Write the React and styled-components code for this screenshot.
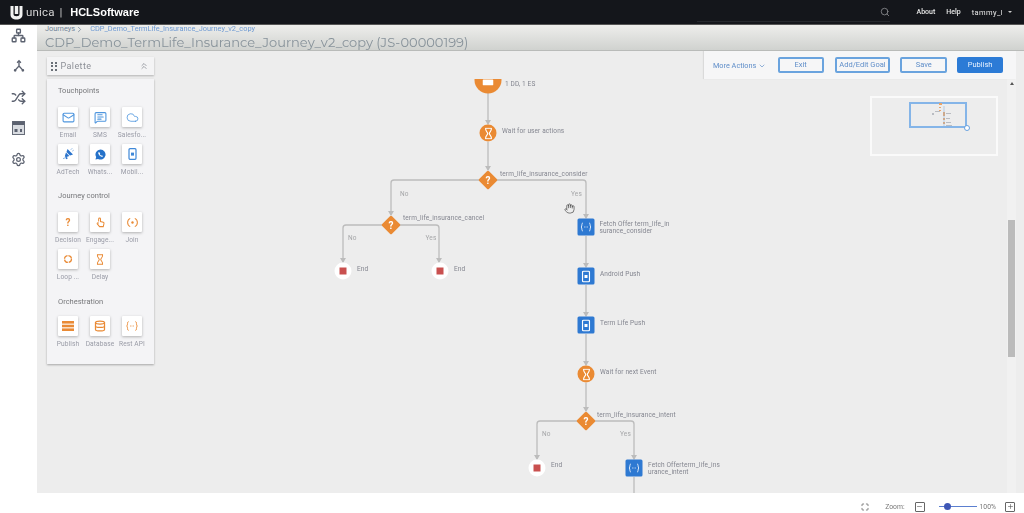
import React from "react";
import styled, { createGlobalStyle } from "styled-components";
import { Network, Shuffle, Settings, Search, ChevronDown, ChevronRight, ChevronsUp, Mail, MessageSquareText, Cloud, Database, Maximize, Minus, Plus, Hand } from "lucide-react";

const Global = createGlobalStyle`
  html, body { margin: 0; padding: 0; background: #fff; overflow: hidden; }
  body { font-family: Roboto, "Liberation Sans", sans-serif; }
  #root { width: 1024px; height: 513px; }
`;
const Page = styled.div`
  width: 1024px; height: 513px; display: flex; flex-direction: column; overflow: hidden; filter: blur(0.4px);
`;
const TopBar = styled.header`
  height: 24px; flex: none; background: #14161b; display: flex; align-items: center; color: #fff; box-shadow: 0 1px 0 #555;
  position: relative; z-index: 3;
`;
const Logo = styled.div`display: flex; align-items: center; padding-left: 10px; width: 140px;`;
const UnicaText = styled.span`font-size: 11.5px; color: #d5d5d5; margin-left: 3px; letter-spacing: .2px;`;
const Sep = styled.span`font-size: 10px; color: #ddd; margin: 0 8px 0 5px;`;
const Hcl = styled.span`font-size: 11px; font-weight: 700; color: #fff; font-family: "Liberation Sans", sans-serif;`;
const SearchWrap = styled.div`
  margin-left: auto; width: 193px; height: 19px; box-sizing: border-box; border-bottom: 1px solid #26292e; display: flex; justify-content: flex-end; align-items: center; color: #8b8d90;
`;
const TopLink = styled.span`font-size: ${p => p.$fs || 7}px; font-weight: ${p => p.$w || 500}; color: #e8e8e8; margin-left: ${p => p.$ml}px; letter-spacing: ${p => p.$ls || 0}px;`;
const Caret = styled.span`width:0;height:0;border-left:2px solid transparent;border-right:2px solid transparent;border-top:2px solid #ccc;margin:0 12px 0 5px;`;
const Body = styled.div`flex: 1; display: flex; min-height: 0;`;
const SideNav = styled.nav`
  width: 37px; flex: none; background: #fff; display: flex; flex-direction: column; align-items: center; gap: 16.4px; padding: 4px 0 0 0; box-sizing: border-box; color: #5c6270;
`;
const Main = styled.main`flex: 1; display: flex; flex-direction: column; min-width: 0;`;
const TitleBand = styled.div`
  height: 27px; flex: none; box-sizing: border-box; padding: 0 0 0 8px; background: linear-gradient(#efefed, #d0d2cf); border-bottom: 1px solid #b9bbb9;
`;
const Crumbs = styled.div`font-size: 7.4px; color: #6f8296; line-height: 10px; display: flex; align-items: center;`;
const CrumbLink = styled.span`color: #6e9ad3; margin-left: 6px;`;
const Title = styled.h1`margin: 1px 0 0; font: 400 13px/15px Montserrat, "Open Sans", sans-serif; color: #87929a; letter-spacing: 0;`;
const Workspace = styled.div`flex: 1; position: relative; background: #ededed; min-height: 0; overflow: hidden;`;
const Footer = styled.footer`
  height: 20px; flex: none; box-sizing: border-box; padding: 7px 9px 0 0; background: #fff; display: flex; align-items: center; justify-content: flex-end; font-size: 6.8px; color: #777;
`;
const FullBtn = styled.span`display: flex; color: #444; margin-right: 12px;`;
const ZoomLabel = styled.span`margin-left: ${p => p.$ml}px;`;
const ZoomBtn = styled.span`display:flex; width:8px; height:8px; border:1px solid #666; border-radius:1px; align-items:center; justify-content:center; color:#555; margin-left:${p=>p.$ml}px;`;
const Slider = styled.div`width: 38px; height: 1px; background: #5b7fd0; margin: 0 1px 0 14px; position: relative;`;
const Thumb = styled.span`position:absolute; left:5px; top:-3px; width:7px; height:7px; border-radius:50%; background:#3e56b5;`;

const Palette = styled.aside`position: absolute; left: 10px; top: 6px; width: 107px; z-index: 2;`;
const PaletteHead = styled.div`
  height: 18px; background: #f4f4f5; box-shadow: 0 1px 2px rgba(0,0,0,.25); display: flex; align-items: center; padding: 0 5px 0 4px; color: #8c8f96; font-size: 9px; letter-spacing: .4px; gap: 4px;
`;
const Dots = styled.span`display: grid; grid-template-columns: 2px 2px; gap: 1.5px;
  i { width: 2px; height: 2px; background: #6a7077; }`;
const PaletteBody = styled.div`
  margin-top: 4px; height: 285px; box-sizing: border-box; background: #f4f4f6; box-shadow: 0 1px 2px rgba(0,0,0,.3); padding: 7px 0 0 11px;
`;
const GroupTitle = styled.div`font-size: 7.5px; line-height: 9px; color: #77787b; margin-bottom: ${p => p.$mb}px; margin-top: ${p => p.$mt || 0}px;`;
const TileGrid = styled.div`display: grid; grid-template-columns: repeat(3, 20px); column-gap: 12px; row-gap: 0;`;
const TileCell = styled.div`height: 37px; display: flex; flex-direction: column; align-items: center;`;
const Tile = styled.div`
  width: 20px; height: 20px; flex: none; background: #fff; border-radius: 1px; box-shadow: 0 1px 3px rgba(0,0,0,.28); display: flex; align-items: center; justify-content: center; color: ${p => p.$c};
  font-weight: 700; font-size: 10px;
`;
const TileLabel = styled.span`font-size: 6.6px; line-height: 8px; color: #999ba6; margin-top: 4px; white-space: nowrap; letter-spacing:.1px;`;

const ActionBar = styled.div`
  position: absolute; right: 8px; top: 0; width: 312px; height: 28px; z-index: 2; background: #f6f6f7; box-shadow: -1px 0 1px rgba(0,0,0,.08); display: flex; align-items: flex-start; padding: 6px 13px 0 9px; box-sizing: border-box;
`;
const More = styled.span`font-size: 7.3px; color: #5f8ec9; display: flex; align-items: center; gap: 2px; margin-top: 4px; width: 65px;`;
const ActionBtn = styled.button`
  width: ${p => p.$w}px; height: 16px; padding: 0 0 1px; box-sizing: border-box; margin-right: ${p => p.$mr}px; border: 2px solid ${p => p.$primary ? "#2c7bd6" : "#6aa3de"}; border-radius: 2px; background: ${p => p.$primary ? "#2c7bd6" : "#f6f6f7"}; color: ${p => p.$primary ? "#eaf3ff" : "#5f8ec9"}; font: 400 7.5px Roboto, sans-serif;
`;
const Minimap = styled.div`
  position: absolute; left: 833px; top: 45px; width: 128px; height: 60px; box-sizing: border-box; border: 2px solid #fafafa; z-index: 1;
`;
const MiniView = styled.div`position: absolute; left: 37px; top: 4px; width: 58px; height: 26px; box-sizing: border-box; border: 2px solid #85b5e8;`;
const MiniHandle = styled.span`position: absolute; right: -5px; bottom: -5px; width: 6px; height: 6px; box-sizing: border-box; border: 1px solid #69a2df; border-radius: 50%; background: #fff;`;
const MiniFlow = styled.svg`position: absolute; left: 15px; top: -1px; width: 30px; height: 24px;`;
const ScrollTrack = styled.div`position: absolute; right: 8px; top: 0; bottom: 0; width: 9px; background: #f1f1f1; display: flex; justify-content: center;`;
const ScrollArrow = styled.span`position:absolute; top:31px; width:0;height:0;border-left:2px solid transparent;border-right:2px solid transparent;border-bottom:3px solid #555;`;
const ScrollThumb = styled.div`position:absolute; top:169px; width:7px; height:137px; background:#bbb;`;

const Canvas = styled.div`position: absolute; left: 0; right: 0; top: 28px; bottom: 0; overflow: hidden;`;
const Connectors = styled.svg`position: absolute; left: 0; top: 0; width: 987px; height: 414px;`;
const Node = styled.div`
  position: absolute; left: ${p => p.$x - 37}px; top: ${p => p.$y - 79}px; transform: translate(-50%, -50%); display: flex; align-items: center; justify-content: center; color: #fff;
`;
const Circle = styled(Node)`width: ${p => p.$r * 2}px; height: ${p => p.$r * 2}px; border-radius: 50%; background: #ea8a33;`;
const Square = styled(Node)`width: 17px; height: 17px; border-radius: 1.5px; background: #2e79d2;`;
const Diamond = styled(Node)`width: 14px; height: 14px; background: #ea8a33; border-radius: 1.5px; transform: translate(-50%, -50%) rotate(45deg);
  b { transform: rotate(-45deg); font: 700 10px Roboto, sans-serif; }`;
const EndNode = styled(Node)`width: 17px; height: 17px; border-radius: 50%; background: #fff;
  i { width: 7px; height: 7px; background: #c9504f; }`;
const Label = styled.div`
  position: absolute; left: ${p => p.$x - 37}px; top: ${p => p.$y - 79}px; font-size: 6.5px; line-height: 7px; color: ${p => p.$light ? "#a5a6a8" : "#83858f"}; white-space: pre; letter-spacing: .12px;
`;
const Cursor = styled.div`position: absolute; left: 527px; top: 120px; color: #444;`;

const Hourglass = ({ w = 8, h = 12 }) => (
  <svg width={w} height={h} viewBox="0 0 8 12" fill="none" stroke="currentColor" strokeWidth="1.1">
    <path d="M.8 .7h6.400M.8 11.300h6.400" />
    <path d="M1.200 .7C.5 3.500 3.200 4.500 3.200 6 3.200 7.500 .5 8.500 1.200 11.300M6.800 .7C7.500 3.500 4.800 4.500 4.800 6 4.800 7.500 7.500 8.500 6.800 11.300" />
  </svg>
);
const Phone = () => (
  <svg width="9" height="12" viewBox="0 0 9 12" fill="none" stroke="currentColor" strokeWidth="1.2">
    <rect x="1" y=".7" width="7" height="10.600" rx="1" />
    <path d="M3 4.600h3v3H3z" fill="currentColor" stroke="none" />
  </svg>
);
const Braces = ({ size = 11 }) => (
  <svg width={size} height={size} viewBox="0 0 12 12" fill="none" stroke="currentColor" strokeWidth=".9">
    <path d="M2.600 1.500C1 1.500 2 5 .8 6 2 7 1 10.500 2.600 10.500M9.400 1.500C11 1.500 10 5 11.200 6 10 7 11 10.500 9.400 10.500" />
    <path d="M4 6h.8M5.600 6h.8M7.200 6h.8" />
  </svg>
);
const Stack = () => (
  <svg width="12" height="10" viewBox="0 0 12 10" fill="currentColor">
    <rect width="12" height="2.600" /><rect y="3.700" width="12" height="2.600" /><rect y="7.400" width="12" height="2.600" />
  </svg>
);
const WhatsApp = () => (
  <svg width="11" height="11" viewBox="0 0 12 12">
    <path d="M6 .5a5.500 5.500 0 0 0-4.700 8.300L.5 11.500l2.800-.7A5.500 5.500 0 1 0 6 .5z" fill="#2471c9" />
    <path d="M4.200 3.200c-.8.500-.8 1.500-.2 2.600s1.600 2.300 3 2.700c.8.200 1.500-.3 1.600-1l-1.200-.8-.6.600c-.7-.3-1.300-1-1.600-1.600l.5-.6-.7-1.200z" fill="#fff" />
  </svg>
);
const AdTech = () => (
  <svg width="12" height="12" viewBox="0 0 12 12" fill="#2b74cc">
    <path d="M5.500 1 11 6.500 8 7.500 4.500 4z" />
    <path d="M4 4.600 7.400 8 3.800 9.200 2.800 8.200z" />
    <path d="M3 9.500 5 9l.7 1.600-1.300.7zM1.200 10.500l1-1 .6.600-1 1z" />
    <path d="M9 1.500l1-1M10.500 3l1-.7" stroke="#2b74cc" strokeWidth=".8" />
  </svg>
);
const Engage = () => (
  <svg width="11" height="11" viewBox="0 0 12 12" fill="none" stroke="currentColor" strokeWidth="1.100">
    <path d="M4 5V2.200a1 1 0 0 1 2 0V5l3 .8c.8.300 1 .8.800 1.500L9 10.500H5L2.500 7.500c-.5-.7.300-1.500 1-1L4 7" />
  </svg>
);
const Join = () => (
  <svg width="11" height="11" viewBox="0 0 12 12" fill="none" stroke="currentColor" strokeWidth="1.100">
    <path d="M3.500 1.500a5 5 0 0 0 0 9M8.500 1.500a5 5 0 0 1 0 9" />
    <circle cx="6" cy="6" r="1.300" fill="currentColor" stroke="none" />
  </svg>
);
const Loop = () => (
  <svg width="10" height="10" viewBox="0 0 12 12" fill="none" stroke="currentColor" strokeWidth="1.500">
    <circle cx="6" cy="6" r="4.200" strokeDasharray="5.500 1.100" />
  </svg>
);
const UnicaMark = () => (
  <svg width="13" height="15" viewBox="0 0 13 15">
    <path d="M.5 1h3v8c0 1.500 1 2.200 3 2.200s3-.7 3-2.200V1h3v8.500c0 3.300-2.400 5-6 5s-6-1.700-6-5z" fill="#f2f2f2" />
    <rect x="4.800" y="1" width="3.400" height="8" fill="#f2f2f2" />
  </svg>
);
const NavBranch = () => (
  <svg width="12" height="14" viewBox="0 0 14 15" fill="none" stroke="currentColor" strokeWidth="1.600">
    <path d="M7 2v5.500L2.800 12M7 7.500l4.200 4.500" />
    <path d="M4.800 3.600 7 1.400l2.200 2.200" />
    <circle cx="2.500" cy="12.500" r=".8" fill="currentColor" /><circle cx="11.500" cy="12.500" r=".8" fill="currentColor" />
  </svg>
);
const NavCalendar = () => (
  <svg width="13" height="14" viewBox="0 0 13 14">
    <rect x=".5" y=".5" width="12" height="13" fill="#d9dce1" stroke="#666c78" />
    <rect x=".5" y=".5" width="12" height="3.500" fill="#5c6270" />
    <rect x="2.500" y="8" width="3" height="3" fill="#5c6270" />
    <rect x="8" y="8" width="2" height="3" fill="#5c6270" />
  </svg>
);
const PaletteIcon = ({ name }) => {
  switch (name) {
    case "Email": return <Mail size={13} strokeWidth={2} color="#4f96de" />;
    case "SMS": return <MessageSquareText size={13} strokeWidth={2} color="#4f96de" />;
    case "Salesfo...": return <Cloud size={13} strokeWidth={1.500} color="#4f96de" />;
    case "AdTech": return <AdTech />;
    case "Whats...": return <WhatsApp />;
    case "Mobil...": return <Phone />;
    case "Decision": return <span>?</span>;
    case "Engage...": return <Engage />;
    case "Join": return <Join />;
    case "Loop ...": return <Loop />;
    case "Delay": return <Hourglass h={11} />;
    case "Publish": return <Stack />;
    case "Database": return <Database size={12} strokeWidth={2.500} />;
    default: return <Braces size={12} />;
  }
};
const groups = [
  { title: "Touchpoints", c: "#3f88d8", mb: 12, mt: 0, items: ["Email", "SMS", "Salesfo...", "AdTech", "Whats...", "Mobil..."] },
  { title: "Journey control", c: "#e98a35", mb: 12, mt: 10, items: ["Decision", "Engage...", "Join", "Loop ...", "Delay"] },
  { title: "Orchestration", c: "#e98a35", mb: 10, mt: 11, items: ["Publish", "Database", "Rest API"] },
];

const straight = [[488, 93, 124], [488, 142, 170], [586, 236, 267], [586, 285, 316], [586, 334, 365], [586, 383, 411]];
const branches = [
  [488, 180, 391, 215], [488, 180, 586, 218],
  [391, 225, 343, 262], [391, 225, 439, 262],
  [585.5, 421, 537, 459], [585.5, 421, 634, 459],
];
const toX = v => v - 37;
const toY = v => v - 79;
const Arrowhead = ({ x, y }) => <path d={`M${toX(x) - 3} ${toY(y) - 4}h6l-3 5z`} />;

const Flow = () => (
  <>
    <Connectors viewBox="0 0 987 414">
      <g fill="none" stroke="#bcbcbc" strokeWidth="1.300">
        {straight.map(([x, y1, y2], i) => <path key={i} d={`M${toX(x)} ${toY(y1)}V${toY(y2)}`} />)}
        {branches.map(([hub, y, x, y2], i) => {
          const s = x < hub ? 1 : -1;
          return <path key={i} d={`M${toX(hub)} ${toY(y)}H${toX(x) + s * 3}Q${toX(x)} ${toY(y)} ${toX(x)} ${toY(y) + 3}V${toY(y2)}`} />;
        })}
        <path d={`M${toX(634)} ${toY(477)}V414`} />
      </g>
      <g fill="#bcbcbc">
        {straight.map(([x, , y2], i) => <Arrowhead key={i} x={x} y={y2} />)}
        {branches.map(([, , x, y2], i) => <Arrowhead key={i} x={x} y={y2} />)}
      </g>
    </Connectors>
    <Circle $x={488} $y={79.500} $r={13.500}>
      <svg width="11" height="12" viewBox="0 0 11 12"><rect y="6" width="11" height="6" rx="1" fill="#fff" /></svg>
    </Circle>
    <Circle $x={488} $y={133} $r={8.500}><Hourglass /></Circle>
    <Diamond $x={488} $y={180}><b>?</b></Diamond>
    <Diamond $x={391} $y={225}><b>?</b></Diamond>
    <EndNode $x={343} $y={271}><i /></EndNode>
    <EndNode $x={439.500} $y={271}><i /></EndNode>
    <Square $x={586} $y={227}><Braces /></Square>
    <Square $x={586} $y={276}><Phone /></Square>
    <Square $x={586} $y={325}><Phone /></Square>
    <Circle $x={586} $y={374} $r={8.500}><Hourglass /></Circle>
    <Diamond $x={585.500} $y={421}><b>?</b></Diamond>
    <EndNode $x={537} $y={468}><i /></EndNode>
    <Square $x={634} $y={468}><Braces /></Square>

    <Label $x={505} $y={81}>1 DD, 1 ES</Label>
    <Label $x={502} $y={128}>Wait for user actions</Label>
    <Label $x={500} $y={171}>term_life_insurance_consider</Label>
    <Label $x={400} $y={191} $light>No</Label>
    <Label $x={571} $y={191} $light>Yes</Label>
    <Label $x={403} $y={215}>term_life_insurance_cancel</Label>
    <Label $x={348} $y={235} $light>No</Label>
    <Label $x={425.500} $y={235} $light>Yes</Label>
    <Label $x={599.500} $y={221}>{"Fetch Offer term_life_in\nsurance_consider"}</Label>
    <Label $x={357} $y={266}>End</Label>
    <Label $x={454} $y={266}>End</Label>
    <Label $x={600} $y={271}>Android Push</Label>
    <Label $x={600} $y={320}>Term Life Push</Label>
    <Label $x={600} $y={369}>Wait for next Event</Label>
    <Label $x={597} $y={412}>term_life_insurance_intent</Label>
    <Label $x={542} $y={431} $light>No</Label>
    <Label $x={620} $y={431} $light>Yes</Label>
    <Label $x={551} $y={462}>End</Label>
    <Label $x={648} $y={462}>{"Fetch Offerterm_life_ins\nurance_intent"}</Label>
    <Cursor><Hand size={11} strokeWidth={1.500} /></Cursor>
  </>
);

export default function App() {
  return (
    <Page>
      <Global />
      <TopBar>
        <Logo>
          <UnicaMark />
          <UnicaText>unica</UnicaText>
          <Sep>|</Sep>
          <Hcl>HCLSoftware</Hcl>
        </Logo>
        <SearchWrap><Search size={10} /></SearchWrap>
        <TopLink $ml={27}>About</TopLink>
        <TopLink $ml={11}>Help</TopLink>
        <TopLink $ml={11} $fs={7.5} $w={400} $ls={.4}>tammy_l</TopLink>
        <Caret />
      </TopBar>
      <Body>
        <SideNav>
          <Network size={15} strokeWidth={2.200} />
          <NavBranch />
          <Shuffle size={15} strokeWidth={2.200} />
          <NavCalendar />
          <Settings size={15} />
        </SideNav>
        <Main>
          <TitleBand>
            <Crumbs>Journeys<ChevronRight size={9} /><CrumbLink>CDP_Demo_TermLife_Insurance_Journey_v2_copy</CrumbLink></Crumbs>
            <Title>CDP_Demo_TermLife_Insurance_Journey_v2_copy (JS-00000199)</Title>
          </TitleBand>
          <Workspace>
            <ScrollTrack>
              <ScrollArrow />
              <ScrollThumb />
            </ScrollTrack>
            <Canvas>
              <Flow />
            </Canvas>
            <Palette>
              <PaletteHead>
                <Dots>{[0, 1, 2, 3, 4, 5].map(i => <i key={i} />)}</Dots>
                <span>Palette</span>
                <ChevronsUp size={10} style={{ marginLeft: "auto" }} />
              </PaletteHead>
              <PaletteBody>
                {groups.map(g => (
                  <div key={g.title}>
                    <GroupTitle $mb={g.mb} $mt={g.mt}>{g.title}</GroupTitle>
                    <TileGrid>
                      {g.items.map(n => (
                        <TileCell key={n}>
                          <Tile $c={g.c}><PaletteIcon name={n} /></Tile>
                          <TileLabel>{n}</TileLabel>
                        </TileCell>
                      ))}
                    </TileGrid>
                  </div>
                ))}
              </PaletteBody>
            </Palette>
            <ActionBar>
              <More>More Actions <ChevronDown size={8} /></More>
              <ActionBtn $w={46} $mr={11}>Exit</ActionBtn>
              <ActionBtn $w={56} $mr={10}>Add/Edit Goal</ActionBtn>
              <ActionBtn $w={47} $mr={10}>Save</ActionBtn>
              <ActionBtn $w={46} $mr={0} $primary>Publish</ActionBtn>
            </ActionBar>
            <Minimap>
              <MiniView>
                <MiniFlow viewBox="0 0 30 24">
                  <path d="M13 0h3v2h-3zM13 4h2v1h-2zM13 7h2v1h-2zM17 9h2v4h-2zM17 15h2v2h-2zM17 19h2v2h-2z" fill="#e9a468" />
                  <path d="M6 10h2v2H6zM9 8h5v1H9zM20 10h5v1h-5zM20 15h4v1h-4zM20 19h5v1h-5zM20 22h6v1h-6z" fill="#b9bcc2" />
                  <path d="M18 3v20" stroke="#8fb6e0" strokeWidth=".6" />
                </MiniFlow>
                <MiniHandle />
              </MiniView>
            </Minimap>
          </Workspace>
          <Footer>
            <FullBtn><Maximize size={8} /></FullBtn>
            <ZoomLabel $ml={4}>Zoom:</ZoomLabel>
            <ZoomBtn $ml={10}><Minus size={7} /></ZoomBtn>
            <Slider><Thumb /></Slider>
            <ZoomLabel $ml={2}>100%</ZoomLabel>
            <ZoomBtn $ml={9}><Plus size={7} /></ZoomBtn>
          </Footer>
        </Main>
      </Body>
    </Page>
  );
}
